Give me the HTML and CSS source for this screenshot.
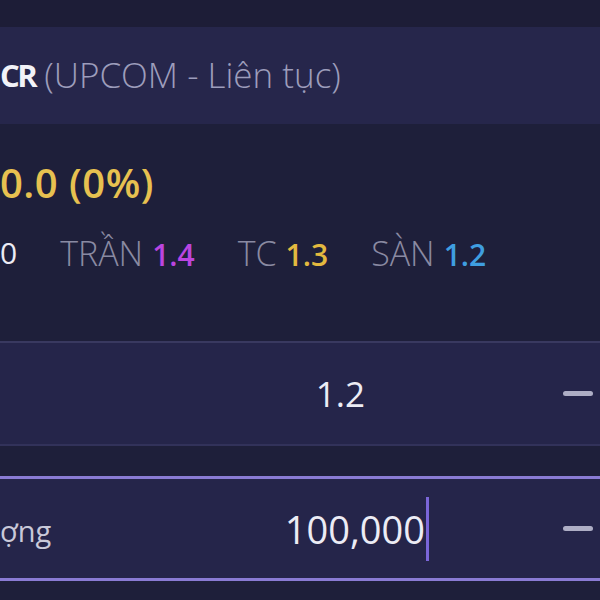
FILE: index.html
```html
<!DOCTYPE html>
<html lang="vi">
<head>
<meta charset="utf-8">
<link rel="stylesheet" href="styles.css">
</head>
<body>
<div class="screen">
  <div class="topbar"></div>
  <div class="header">
    <span class="ticker">CR</span>
    <span class="exchange">(UPCOM - Liên tục)</span>
  </div>
  <div class="quote">
    <div class="change">0.0 (0%)</div>
    <div class="refs">
      <span class="vol">0</span>
      <span class="ref"><span class="ref-label">TRẦN</span> <span class="ceil">1.4</span></span>
      <span class="ref"><span class="ref-label">TC</span> <span class="basic">1.3</span></span>
      <span class="ref"><span class="ref-label">SÀN</span> <span class="floor">1.2</span></span>
    </div>
  </div>
  <div class="field field-price">
    <span class="field-label"></span>
    <span class="field-value">1.2</span>
    <span class="minus"></span>
  </div>
  <div class="field field-qty">
    <span class="field-label">ợng</span>
    <span class="field-value">100,000<span class="caret"></span></span>
    <span class="minus"></span>
  </div>
</div>
</body>
</html>
```

FILE: styles.css
```css
* { box-sizing: border-box; }
html, body {
  margin: 0;
  padding: 0;
  background: #1d1e38;
}
.screen {
  width: 600px;
  height: 600px;
  overflow: hidden;
  font-family: "Open Sans", "Noto Sans", sans-serif;
  background: #1e1f3a;
}
.topbar {
  height: 27px;
  background: #1d1d37;
}
.header {
  height: 97px;
  background: #26264b;
  display: flex;
  align-items: center;
  gap: 9px;
  font-size: 31px;
  padding-bottom: 2px;
}
.ticker {
  color: #f2f2f8;
  font-weight: 700;
  letter-spacing: -2.5px;
}
.exchange {
  color: #9d9dbb;
  font-weight: 300;
  font-size: 35px;
}
.quote {
  height: 217px;
  padding-top: 34px;
}
.change {
  color: #e7c150;
  font-size: 40px;
  font-weight: 600;
  line-height: 50px;
  letter-spacing: 0.5px;
}
.refs {
  margin-top: 25px;
  display: flex;
  gap: 43px;
  font-size: 30px;
  line-height: 40px;
}
.vol { color: #ececf4; }
.ref { display: flex; align-items: baseline; gap: 9px; }
.ref-label { color: #8a8aa2; font-size: 34px; font-weight: 300; }
.ceil { color: #bb45e0; font-weight: 600; }
.basic { color: #e3b93f; font-weight: 600; }
.floor { color: #3f9ee0; font-weight: 600; }

.field {
  display: flex;
  align-items: center;
  background: #25254a;
}
.field-price {
  height: 105px;
  border-top: 2px solid #393960;
  border-bottom: 2px solid #32325a;
}
.field-qty {
  margin-top: 30px;
  height: 105px;
  border-top: 3px solid #8a7bd4;
  border-bottom: 3px solid #8a7bd4;
}
.field-label {
  color: #c9c9d9;
  font-size: 29px;
  padding-top: 4px;
}
.field-value {
  margin-left: auto;
  color: #ececf5;
  font-size: 38px;
  display: flex;
  align-items: center;
}
.field-price .field-value { margin-right: 198px; font-size: 35px; }
.field-qty .field-value { margin-right: 134px; }
.caret {
  display: block;
  width: 3px;
  height: 64px;
  margin-left: 1px;
  background: #7b66d9;
}
.minus {
  width: 30px;
  height: 5px;
  border-radius: 3px;
  background: #aeaec5;
  margin-right: 7px;
}
```
